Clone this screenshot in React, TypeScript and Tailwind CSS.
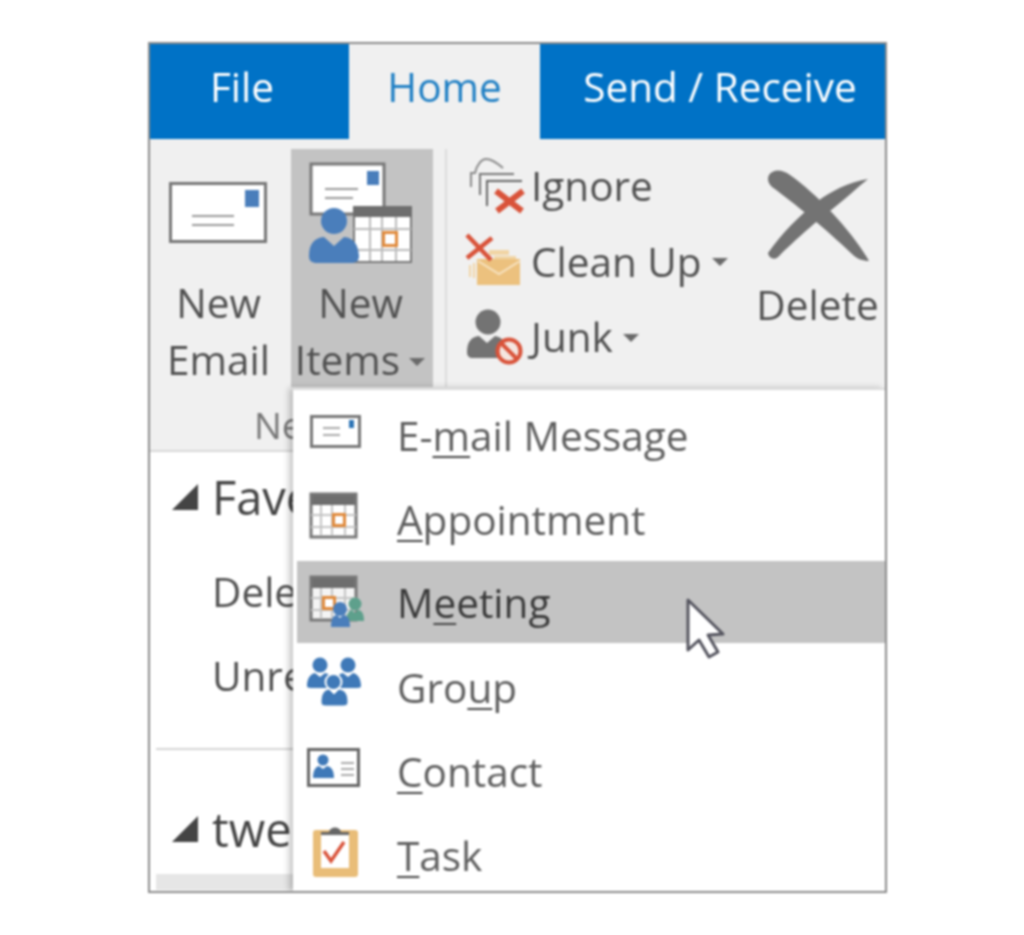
import type { ReactNode } from "react";

function Caret({ className = "" }: { className?: string }) {
  return (
    <svg width="18" height="10" viewBox="0 0 18 10" className={className}>
      <path d="M1 1h16l-8 8z" fill="#6a6a6a" />
    </svg>
  );
}

function NewEmailIcon() {
  return (
    <svg width="98" height="61" viewBox="0 0 98 61" className="mr-[2px] flex-none">
      <rect x="1.500" y="1.500" width="95" height="58" fill="#fff" stroke="#777" strokeWidth="3" />
      <rect x="76" y="8" width="14" height="17" fill="#4a7ebb" />
      <path d="M23 34h42M23 43h42" stroke="#999" strokeWidth="2" />
    </svg>
  );
}

function NewItemsIcon() {
  return (
    <svg width="104" height="102" viewBox="0 0 104 102" className="mr-[2px] flex-none">
      <rect x="3" y="2" width="73" height="50" fill="#fff" stroke="#777" strokeWidth="3" />
      <rect x="59" y="9" width="12" height="14" fill="#4a7ebb" />
      <path d="M17 27h33M17 36h28" stroke="#999" strokeWidth="2" />
      <rect x="46" y="45" width="57" height="55" fill="#fff" stroke="#777" strokeWidth="2" />
      <rect x="45" y="44" width="59" height="11" fill="#6e6e6e" />
      <path d="M62 55v44M74 55v44M88 55v44M46 67h57M46 88h57" stroke="#bbb" strokeWidth="2" />
      <rect x="75.500" y="70.500" width="13" height="13" fill="#fff" stroke="#e08a3c" strokeWidth="3" />
      <circle cx="26" cy="59" r="13" fill="#4a7ebb" />
      <path d="M1 94c0-12 5-18 15-19l10 9 10-9c10 1 14 7 15 19 0 5-3 7-8 7H9c-5 0-8-2-8-7z" fill="#4a7ebb" />
    </svg>
  );
}

function IgnoreIcon() {
  return (
    <svg width="56" height="56" viewBox="0 0 56 56" fill="none" className="ml-[4px]">
      <path d="M2 29V15h4C8 6 13 1 17 1s10 3 17 9" stroke="#8a8a8a" strokeWidth="2" />
      <path d="M11 37V16h34" stroke="#777" strokeWidth="2" />
      <path d="M18 48V23h35" stroke="#666" strokeWidth="2" />
      <path d="M27 33l26 20M54 33L28 53" stroke="#d9533a" strokeWidth="6" />
    </svg>
  );
}

function CleanUpIcon() {
  return (
    <svg width="56" height="52" viewBox="0 0 56 52" fill="none" className="-mt-[4px]">
      <path d="M24 17h20v5H24zM29 23h22v5H29z" fill="#f1d5a5" />
      <path d="M12 26h43v26H12z" fill="#ecc17e" />
      <path d="M13 28l21 13 21-13" stroke="#f7e3c1" strokeWidth="2" />
      <path d="M5 32v12M9 30v15" stroke="#f1d5a5" strokeWidth="2" />
      <path d="M2 2l24 25M27 5L2 25" stroke="#d9533a" strokeWidth="4.500" />
    </svg>
  );
}

function JunkIcon() {
  return (
    <svg width="58" height="58" viewBox="0 0 58 58" className="ml-[1px]">
      <circle cx="22" cy="14" r="12.500" fill="#737373" />
      <path d="M1 44c0-10 4-15 12-16l8 7 8-7c5 1 8 3 9 7-4 3-6 8-6 15H7c-4 0-6-2-6-6z" fill="#737373" />
      <circle cx="43" cy="43" r="11.500" fill="#f5e6e0" stroke="#d9533a" strokeWidth="4" />
      <path d="M35 35l16 16" stroke="#d9533a" strokeWidth="4" />
    </svg>
  );
}

function DeleteIcon() {
  return (
    <svg width="108" height="98" viewBox="0 0 108 98" className="flex-none">
      <path
        d="M5 8C9 2 18 2 26 8c26 18 62 56 79 86-6 0-12-2-17-7C62 62 30 36 8 20 4 16 3 12 5 8z"
        fill="#737373"
      />
      <path
        d="M104 12C84 15 66 25 54 34 34 50 18 66 4 86c1 6 7 7 10 4 12-12 36-34 52-46 14-11 28-24 38-32z"
        fill="#737373"
      />
    </svg>
  );
}

function EmailMenuIcon() {
  return (
    <svg width="64" height="64" viewBox="0 0 64 64" className="overflow-visible">
      <rect x="7.500" y="12.500" width="48" height="30" fill="#fff" stroke="#777" strokeWidth="3" />
      <rect x="45" y="16" width="5" height="8" fill="#2e75b6" />
      <path d="M19 24h17M19 31h17" stroke="#aaa" strokeWidth="2" />
    </svg>
  );
}

function CalendarMarks() {
  return (
    <>
      <rect x="6" y="5" width="47" height="12" fill="#6e6e6e" />
      <rect x="7" y="6" width="45" height="43" fill="none" stroke="#777" strokeWidth="3" />
      <path d="M17 17v31M28 17v31M41 17v31M7 27h45M7 39h45" stroke="#c4c4c4" strokeWidth="2" />
    </>
  );
}

function AppointmentMenuIcon() {
  return (
    <svg width="64" height="64" viewBox="0 0 64 64" className="overflow-visible">
      <rect x="7" y="6" width="45" height="43" fill="#fff" />
      <CalendarMarks />
      <rect x="29.500" y="26.500" width="11" height="11" fill="#fff" stroke="#e08a3c" strokeWidth="3" />
    </svg>
  );
}

function MeetingMenuIcon() {
  return (
    <svg width="64" height="64" viewBox="0 0 64 64" className="overflow-visible">
      <rect x="7" y="6" width="45" height="43" fill="#f4f4f4" />
      <CalendarMarks />
      <rect x="19.500" y="26.500" width="11" height="11" fill="#fff" stroke="#e08a3c" strokeWidth="3" />
      <circle cx="51" cy="33" r="6.500" fill="#5ea08c" />
      <path d="M42 50c0-7 3-11 6-11l3 3 3-3c4 0 6 4 6 11z" fill="#5ea08c" />
      <circle cx="36" cy="38" r="7" fill="#4a7ebb" />
      <path d="M27 56c0-8 2-12 6-12l3 3 3-3c5 0 7 4 7 12z" fill="#4a7ebb" />
    </svg>
  );
}

function GroupMenuIcon() {
  return (
    <svg width="64" height="64" viewBox="0 0 64 64" className="overflow-visible" fill="#3f79b8">
      <circle cx="16" cy="9" r="7.500" />
      <circle cx="44" cy="9" r="7.500" />
      <path d="M3 30c0-7 3-12 8-13l5 4 5-4c5 1 7 5 7 13 0 1-1 2-3 2H7c-3 0-4-1-4-2z" />
      <path d="M57 30c0-7-3-12-8-13l-5 4-5-4c-5 1-7 5-7 13 0 1 1 2 3 2h18c3 0 4-1 4-2z" />
      <circle cx="29.500" cy="26" r="8" stroke="#fff" strokeWidth="2" />
      <path d="M17 46c0-8 3-12 8-13l5 5 5-5c6 1 9 5 9 13 0 3-2 4-5 4H22c-3 0-5-1-5-4z" stroke="#fff" strokeWidth="1" />
    </svg>
  );
}

function ContactMenuIcon() {
  return (
    <svg width="64" height="64" viewBox="0 0 64 64" className="overflow-visible">
      <rect x="4.500" y="9.500" width="50" height="36" fill="#fff" stroke="#666" strokeWidth="3" />
      <circle cx="19" cy="20" r="5.500" fill="#3f79b8" />
      <path d="M9 38c0-7 2-11 6-12l4 3 4-3c5 1 7 5 7 12z" fill="#3f79b8" />
      <path d="M37 23h13M37 29h13M37 35h13" stroke="#aaa" strokeWidth="2" />
    </svg>
  );
}

function TaskMenuIcon() {
  return (
    <svg width="64" height="64" viewBox="0 0 64 64" className="overflow-visible">
      <rect x="9" y="6" width="45" height="47" rx="3" fill="#e9bd78" />
      <rect x="17" y="11" width="28" height="33" fill="#fff" />
      <path d="M17 11V8h8c1-6 11-6 12 0h8v3z" fill="#666" />
      <path d="M20 27l7 10 13-19" fill="none" stroke="#d9533a" strokeWidth="3.500" />
    </svg>
  );
}

function SmallButton({ icon, label, caret }: { icon: ReactNode; label: string; caret?: boolean }) {
  return (
    <div className="flex h-[75.5px] items-center">
      <div className="w-[66px] flex-none">{icon}</div>
      <span className="whitespace-nowrap">{label}</span>
      {caret && <Caret className="ml-[9px] mt-[2px]" />}
    </div>
  );
}

function MenuRow({ icon, children, active }: { icon: ReactNode; children: ReactNode; active?: boolean }) {
  return (
    <div
      className={
        active
          ? "-mt-[1px] mb-[3px] ml-[4px] flex h-[82px] items-center bg-[#c3c3c3] pl-[7px] pt-[2px] text-[#3a3a3a]"
          : "flex h-[84px] items-center pl-[11px]"
      }
    >
      <div className="w-[64px] flex-none">{icon}</div>
      <span className="ml-[29px] whitespace-nowrap">{children}</span>
    </div>
  );
}

function Key({ children }: { children: string }) {
  return (
    <span className="underline decoration-[#444] decoration-2 underline-offset-[5px] [text-decoration-skip-ink:none]">
      {children}
    </span>
  );
}

export default function App() {
  return (
    <div className="min-h-[935px] bg-white pl-[148px] pt-[42px] font-['Open_Sans',sans-serif] text-[40.5px] text-[#505050] blur-[0.8px]">
      <div className="relative h-[851px] w-[739px] overflow-hidden border-2 border-[#8a8a8a]">
        {/* tabs */}
        <div className="flex h-[95px] text-white">
          <div className="flex h-full w-[199px] items-center justify-center bg-[#0072c6] pb-[8px] pr-[15px]">File</div>
          <div className="flex h-full w-[191px] items-center justify-center bg-[#f0f0f0] pb-[8px] text-[#1f7fc4]">Home</div>
          <div className="flex h-full flex-1 items-center justify-center whitespace-nowrap bg-[#0072c6] pb-[8px] pl-[15px]">
            Send / Receive
          </div>
        </div>

        {/* ribbon */}
        <div className="h-[313px] border-b-2 border-[#d8d8d8] bg-[#f0f0f0] leading-[57px]">
          <div className="flex h-[248px]">
            <div className="flex w-[141px] flex-col items-center pr-[4px] pt-[43px]">
              <NewEmailIcon />
              <div className="mt-[31px] text-center">
                New
                <br />
                Email
              </div>
            </div>
            <div className="mt-[10px] flex w-[142px] flex-col items-center bg-[#c3c3c3] pr-[3px] pt-[13px]">
              <NewItemsIcon />
              <div className="mt-[10px] text-center">
                New
                <br />
                <span className="inline-flex items-center whitespace-nowrap">
                  Items
                  <Caret className="ml-[8px] mt-[4px]" />
                </span>
              </div>
            </div>
            <div className="ml-[12px] mt-[10px] w-[2px] bg-[#dcdcdc]" />
            <div className="mt-[9px] w-[303px] pl-[18px]">
              <SmallButton icon={<IgnoreIcon />} label="Ignore" />
              <SmallButton icon={<CleanUpIcon />} label="Clean Up" caret />
              <SmallButton icon={<JunkIcon />} label="Junk" caret />
            </div>
            <div className="flex flex-1 flex-col items-center pt-[28px]">
              <DeleteIcon />
              <div className="mt-[11px]">Delete</div>
            </div>
          </div>
          <div className="pl-[104px] pt-[9px] text-[37px] text-[#777]">New</div>
        </div>

        {/* folder pane, mostly behind the menu */}
        <div className="flex w-[143px] flex-col overflow-hidden whitespace-nowrap bg-white pl-[22px]">
          <div className="flex h-[90px] items-center text-[47px] text-[#444]">
            <svg width="26" height="26" viewBox="0 0 26 26" className="mr-[14px] flex-none">
              <path d="M26 0v26H0z" fill="#444" />
            </svg>
            Fave
          </div>
          <div className="mt-[8px] flex h-[84px] items-center pl-[40px]">Dele</div>
          <div className="flex h-[84px] items-center pl-[40px]">Unre</div>
          <div className="mt-[30px] h-[2px] w-[137px] -translate-x-[16px] bg-[#d5d5d5]" />
          <div className="flex h-[124px] items-center pt-[34px] text-[47px] text-[#444]">
            <svg width="26" height="26" viewBox="0 0 26 26" className="mr-[14px] flex-none">
              <path d="M26 0v26H0z" fill="#444" />
            </svg>
            twe
          </div>
          <div className="h-[16px] w-[137px] -translate-x-[16px] bg-[#e6e6e6]" />
        </div>

        {/* new items menu */}
        <div className="absolute bottom-0 left-[143px] right-0 top-[344px] overflow-hidden border-t-2 border-[#dcdcdc] bg-white pt-[4px] text-[#5f5f5f] shadow-[-4px_0_6px_rgba(0,0,0,0.22)]">
          <MenuRow icon={<EmailMenuIcon />}>
            E-<Key>m</Key>ail Message
          </MenuRow>
          <MenuRow icon={<AppointmentMenuIcon />}>
            <Key>A</Key>ppointment
          </MenuRow>
          <MenuRow icon={<MeetingMenuIcon />} active>
            M<Key>e</Key>eting
          </MenuRow>
          <MenuRow icon={<GroupMenuIcon />}>
            Gro<Key>u</Key>p
          </MenuRow>
          <MenuRow icon={<ContactMenuIcon />}>
            <Key>C</Key>ontact
          </MenuRow>
          <MenuRow icon={<TaskMenuIcon />}>
            <Key>T</Key>ask
          </MenuRow>
        </div>

        {/* mouse pointer */}
        <svg width="44" height="64" viewBox="0 0 44 64" className="absolute left-[534px] top-[553px]">
          <path
            d="M4 3v50l11-10 10 17 9-5-10-17 15-1z"
            fill="#fff"
            stroke="#55555f"
            strokeWidth="3"
            strokeLinejoin="round"
          />
        </svg>
      </div>
    </div>
  );
}
